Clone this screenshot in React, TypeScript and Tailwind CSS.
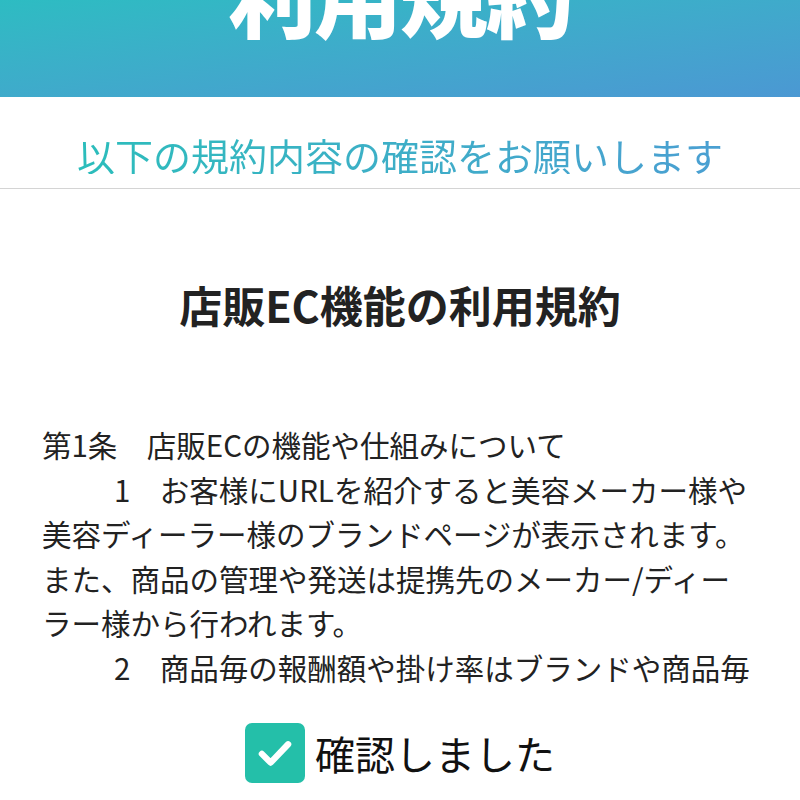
import { useState } from "react";

const jp = { fontFamily: '"Noto Sans CJK JP", "Noto Sans", sans-serif' };

const lines: { text: string; indent?: boolean }[] = [
  { text: "第1条　店販ECの機能や仕組みについて" },
  { text: "1　お客様にURLを紹介すると美容メーカー様や", indent: true },
  { text: "美容ディーラー様のブランドページが表示されます。" },
  { text: "また、商品の管理や発送は提携先のメーカー/ディー" },
  { text: "ラー様から行われます。" },
  { text: "2　商品毎の報酬額や掛け率はブランドや商品毎", indent: true },
];

export default function App() {
  const [checked, setChecked] = useState(true);

  return (
    <div className="h-[800px] w-[800px] overflow-hidden bg-white text-[#222]" style={jp}>
      <header className="flex h-[97px] items-end justify-center overflow-hidden bg-gradient-to-br from-[#2dbcc2] to-[#4b98d3]">
        <h1 className="mb-[60px] text-[88px] font-black leading-none tracking-[-2px] text-white">利用規約</h1>
      </header>

      <div className="border-b border-[#d4d4d4] pb-[12px] pt-[39px] text-center">
        <p className="inline-block bg-gradient-to-r from-[#2bbdbb] to-[#4a9fd2] bg-clip-text text-[38px] leading-none text-transparent">
          以下の規約内容の確認をお願いします
        </p>
      </div>

      <h2 className="mt-[94px] text-center text-[43px] font-bold leading-none">店販EC機能の利用規約</h2>

      <div className="mt-[96px] h-[267px] overflow-hidden px-[42px] text-[29.5px] leading-[44.5px]">
        {lines.map((l, i) => (
          <div key={i} className={`whitespace-nowrap ${l.indent ? "pl-[72px]" : ""}`}>
            {l.text}
          </div>
        ))}
      </div>

      <label className="mt-[34px] flex cursor-pointer items-center justify-center gap-[10px]">
        <input type="checkbox" className="hidden" checked={checked} onChange={() => setChecked(!checked)} />
        <span className="flex h-[60px] w-[60px] items-center justify-center rounded-[7px] bg-[#24bfa9]">
          {checked && (
            <svg viewBox="0 0 24 24" className="h-[42px] w-[42px]" fill="none" stroke="white" strokeWidth="3.6" strokeLinecap="round" strokeLinejoin="round">
              <path d="M4.5 12.5l5 5L19.5 7" />
            </svg>
          )}
        </span>
        <span className="text-[40px] leading-none text-[#111]">確認しました</span>
      </label>
    </div>
  );
}
